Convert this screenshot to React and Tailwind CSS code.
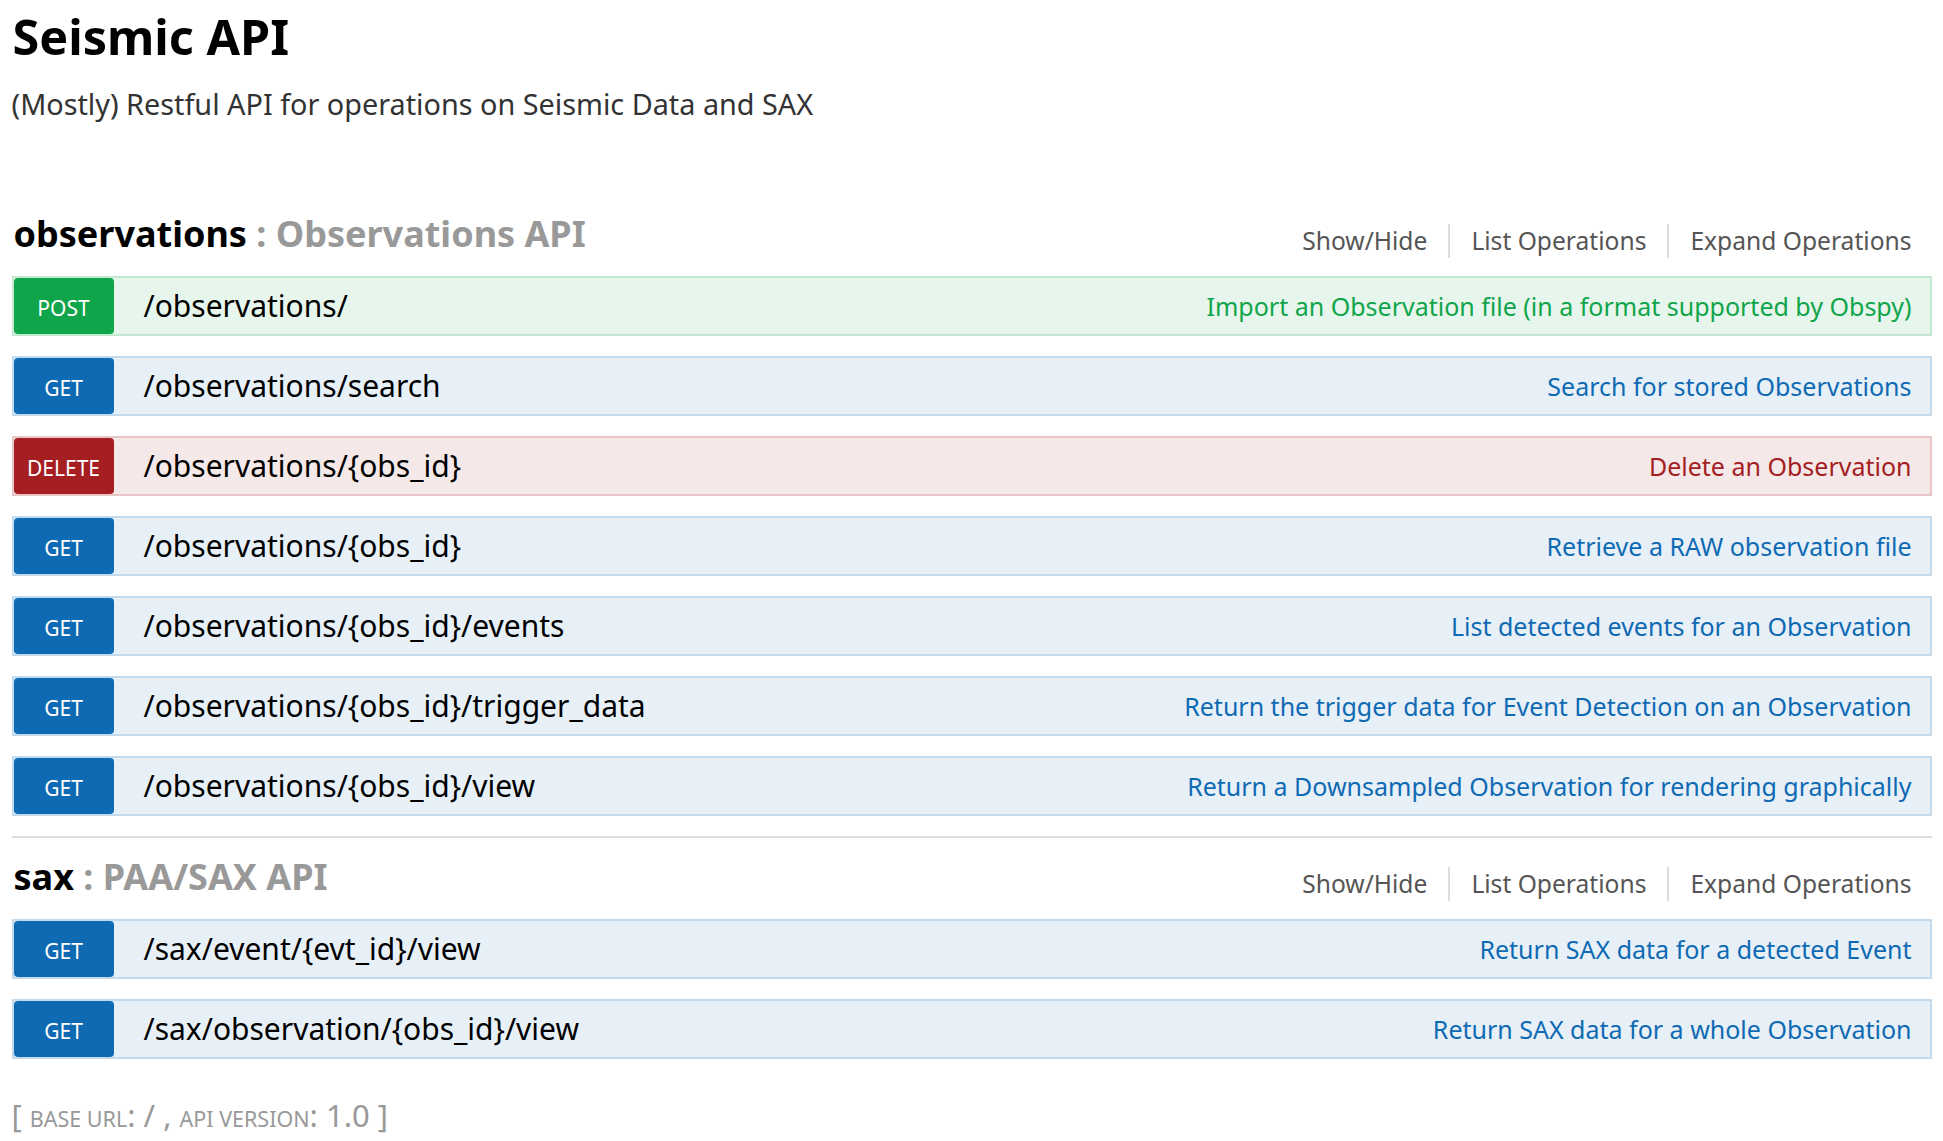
const METHOD = {
  POST: { badge: 'bg-[#10a54a]', row: 'bg-[#e7f6ec] border-[#c3e8d1]', desc: 'text-[#10a54a]' },
  GET: { badge: 'bg-[#0f6ab4]', row: 'bg-[#e7f0f7] border-[#c3d9ec]', desc: 'text-[#0f6ab4]' },
  DELETE: { badge: 'bg-[#a41e22]', row: 'bg-[#f5e8e8] border-[#e8c6c7]', desc: 'text-[#a41e22]' },
};

const resources = [
  {
    name: 'observations',
    title: 'Observations API',
    ops: [
      { method: 'POST', path: '/observations/', summary: 'Import an Observation file (in a format supported by Obspy)' },
      { method: 'GET', path: '/observations/search', summary: 'Search for stored Observations' },
      { method: 'DELETE', path: '/observations/{obs_id}', summary: 'Delete an Observation' },
      { method: 'GET', path: '/observations/{obs_id}', summary: 'Retrieve a RAW observation file' },
      { method: 'GET', path: '/observations/{obs_id}/events', summary: 'List detected events for an Observation' },
      { method: 'GET', path: '/observations/{obs_id}/trigger_data', summary: 'Return the trigger data for Event Detection on an Observation' },
      { method: 'GET', path: '/observations/{obs_id}/view', summary: 'Return a Downsampled Observation for rendering graphically' },
    ],
  },
  {
    name: 'sax',
    title: 'PAA/SAX API',
    ops: [
      { method: 'GET', path: '/sax/event/{evt_id}/view', summary: 'Return SAX data for a detected Event' },
      { method: 'GET', path: '/sax/observation/{obs_id}/view', summary: 'Return SAX data for a whole Observation' },
    ],
  },
];

function Operation({ op }) {
  const m = METHOD[op.method];
  return (
    <li className={`mb-[20px] h-[60px] flex items-center border-2 ${m.row}`}>
      <span className={`w-[100px] h-full shrink-0 rounded-[4px] flex items-center justify-center pt-[6px] text-white text-[21px] ${m.badge}`}>
        {op.method}
      </span>
      <span className="pl-[30px] text-[30px] text-black leading-none">{op.path}</span>
      <span className={`ml-auto pr-[18px] text-[25px] leading-none ${m.desc}`}>{op.summary}</span>
    </li>
  );
}

function Resource({ res, last, first }) {
  return (
    <section className={last ? '' : 'border-b-2 border-[#ddd]'}>
      <div className={`flex items-end justify-between h-[42px] mb-[21px] ${first ? '' : 'mt-[18px]'}`}>
        <h2 className="text-[36px] leading-[42px] font-bold pl-[2px]">
          <span className="text-black">{res.name}</span>
          <span className="text-[#999]"> : {res.title}</span>
        </h2>
        <ul className="flex items-center text-[24.6px] leading-[34px] text-[#555] pr-[20px] translate-y-[3px]">
          <li className="pr-[21px]">Show/Hide</li>
          <li className="px-[21px] border-l-2 border-[#ddd]">List Operations</li>
          <li className="pl-[21px] border-l-2 border-[#ddd]">Expand Operations</li>
        </ul>
      </div>
      <ul>
        {res.ops.map((op, i) => <Operation key={i} op={op} />)}
      </ul>
    </section>
  );
}

export default function App() {
  return (
    <div className="min-h-screen bg-white font-['Noto_Sans','Open_Sans',sans-serif]">
      <div className="max-w-[1920px] mx-auto pt-[6px]">
        <h1 className="text-[48.5px] leading-[60px] font-bold text-black pl-[1px]">Seismic API</h1>
        <p className="mt-[20px] text-[28.8px] leading-[36px] text-[#333]">(Mostly) Restful API for operations on Seismic Data and SAX</p>

        <div className="mt-[91px]">
          {resources.map((r, i) => (
            <Resource key={r.name} res={r} first={i === 0} last={i === resources.length - 1} />
          ))}
        </div>

        <div className="mt-[38px] text-[31px] leading-[36px] text-[#999]">
          [ <span className="text-[21.5px] uppercase">base url</span>: / , <span className="text-[21.5px] uppercase">api version</span>: 1.0 ]
        </div>
      </div>
    </div>
  );
}
